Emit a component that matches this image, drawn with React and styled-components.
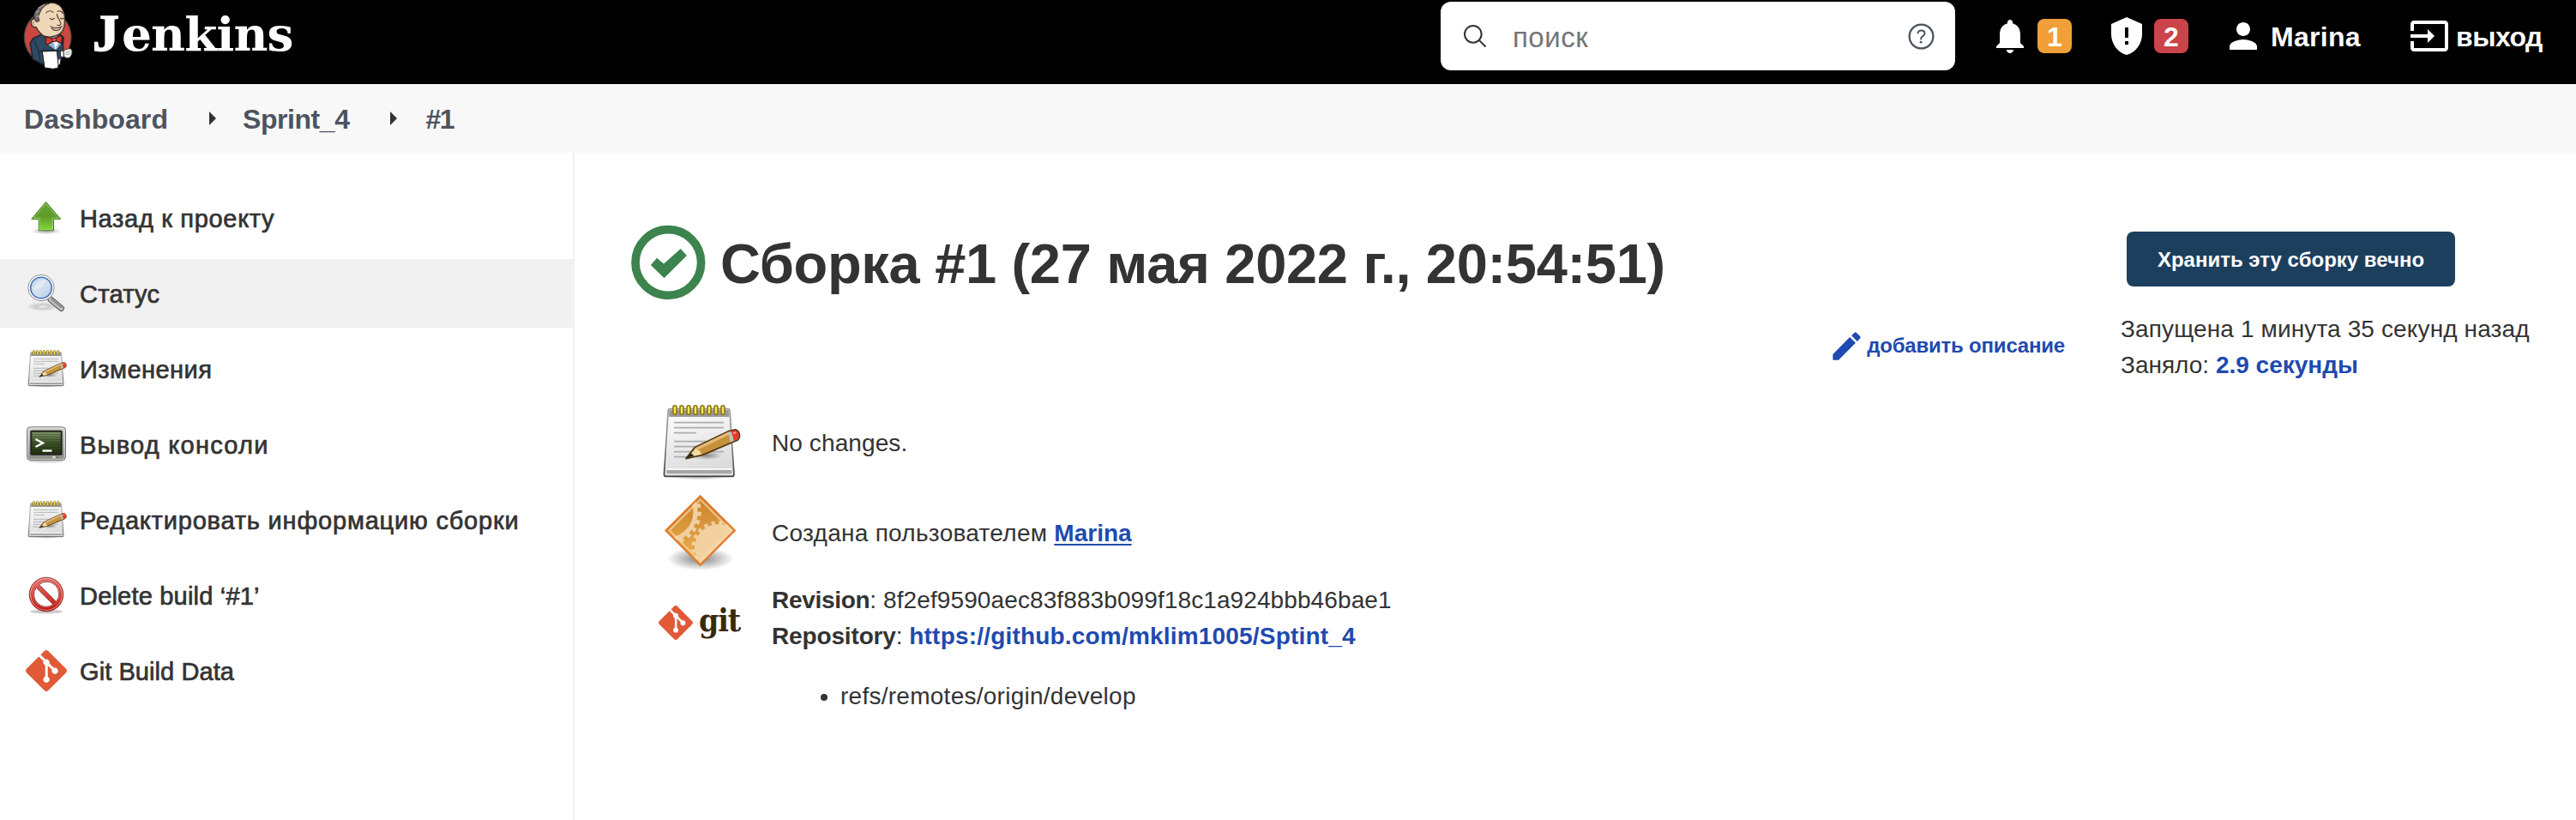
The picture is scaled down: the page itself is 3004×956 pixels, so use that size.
import React from "react";
import styled, { createGlobalStyle } from "styled-components";
import { SiGit } from "react-icons/si";

const GlobalStyle = createGlobalStyle`
  *, *::before, *::after { box-sizing: border-box; }
  body {
    margin: 0;
    background: #fff;
    color: #333;
    font-family: "Liberation Sans", Arial, sans-serif;
    font-size: 28px;
    line-height: 42px;
  }
`;

const Page = styled.div`
  display: flex;
  flex-direction: column;
  width: 3004px;
  height: 956px;
  overflow: hidden;
`;

/* ---------- header ---------- */
const Header = styled.header`
  display: flex;
  align-items: center;
  height: 98px;
  padding: 0 0 14px 10px;
  background: #000;
  color: #fff;
  flex: none;
`;
const Brand = styled.a`
  display: flex;
  align-items: flex-start;
  height: 84px;
`;
const BrandName = styled.span`
  margin-left: 8px;
  padding-top: 1px;
  font: bold 55px/78px "DejaVu Serif", serif;
  letter-spacing: -0.9px;
  white-space: nowrap;
`;
const BrandInitial = styled.span`
  font: bold 62px/60px "Liberation Serif", serif;
  letter-spacing: 3px;
  -webkit-text-stroke: 1.6px #fff;
`;
const SearchBox = styled.div`
  display: flex;
  align-items: center;
  width: 600px;
  height: 80px;
  margin-left: auto;
  padding: 0 21px 0 24px;
  border-radius: 12px;
  background: #fff;
  color: #333;
`;
const SearchHint = styled.span`
  flex: 1;
  padding: 3px 0 0 28px;
  font-size: 33px;
  letter-spacing: 0.5px;
  color: #757575;
`;
const HeaderTools = styled.nav`
  display: flex;
  align-items: center;
  width: 724px;
  padding-left: 40px;
`;
const Tool = styled.a`
  display: flex;
  align-items: center;
  margin-right: ${(p) => p.$after}px;
`;
const Badge = styled.span`
  width: 40px;
  height: 40px;
  margin-left: ${(p) => p.$gap}px;
  padding-top: 1px;
  border-radius: 8px;
  background: ${(p) => p.$color};
  font-size: 32px;
  font-weight: bold;
  line-height: 40px;
  text-align: center;
`;
const ToolLabel = styled.span`
  padding-top: 2px;
  margin-left: ${(p) => p.$gap}px;
  font-size: 32px;
  font-weight: bold;
  letter-spacing: ${(p) => p.$track || 0}px;
`;

/* ---------- breadcrumbs ---------- */
const Breadcrumbs = styled.nav`
  display: flex;
  align-items: center;
  flex: none;
  height: 80px;
  padding: 2px 0 0 28px;
  background: #f8f8f8;
`;
const Crumb = styled.a`
  font-size: 32px;
  font-weight: bold;
  color: #4d545d;
  letter-spacing: ${(p) => p.$track}px;
`;
const CrumbArrow = styled.i`
  margin: 0 ${(p) => p.$right}px 2px 48px;
  border: 8px solid transparent;
  border-left-color: #333;
  border-right: 0;
`;

/* ---------- side panel ---------- */
const Body = styled.div`
  display: flex;
  flex: 1;
`;
const SidePanel = styled.aside`
  display: flex;
  flex-direction: column;
  gap: 8px;
  width: 670px;
  padding-top: 36px;
  border-right: 2px solid #f1f1f1;
`;
const Task = styled.a`
  display: flex;
  align-items: center;
  gap: 15px;
  height: 80px;
  padding-left: 30px;
  background: ${(p) => (p.$active ? "#f1f1f1" : "transparent")};
  white-space: nowrap;
`;
const TaskLabel = styled.span`
  padding-top: 1px;
  font-size: 29px;
  -webkit-text-stroke: 0.7px #333;
  letter-spacing: ${(p) => p.$track}px;
`;

/* ---------- main panel ---------- */
const Main = styled.main`
  display: flex;
  flex: 1;
  padding: 84px 0 0 66px;
`;
const Build = styled.section`
  width: 1672px;
  margin-right: 65px;
`;
const TitleRow = styled.div`
  display: flex;
  align-items: center;
  height: 88px;
`;
const Title = styled.h1`
  margin: 0 0 0 16px;
  padding-top: 3px;
  font-size: 65px;
  line-height: 80px;
  letter-spacing: -0.32px;
  white-space: nowrap;
`;
const DescriptionRow = styled.div`
  display: flex;
  align-items: center;
  justify-content: flex-end;
  gap: 2px;
  height: 42px;
  margin: 32px 0 44px;
  font-size: 24px;
  font-weight: bold;
  letter-spacing: -0.2px;
  color: #1f4aaf;
`;
const Facts = styled.div`
  display: flex;
  flex-direction: column;
  gap: 9px;
  padding-left: 32px;
`;
const Fact = styled.div`
  display: flex;
  align-items: ${(p) => (p.$top ? "flex-start" : "center")};
  gap: 36px;
  height: ${(p) => (p.$top ? "auto" : "96px")};
`;
const FactText = styled.div`
  padding-top: ${(p) => p.$drop}px;
`;
const Line = styled.div`
  letter-spacing: ${(p) => p.$track || 0}px;
`;
const Term = styled.b`
  letter-spacing: ${(p) => p.$track}px;
`;
const Link = styled.a`
  font-weight: bold;
  color: #1f4aaf;
  letter-spacing: ${(p) => p.$track || 0}px;
  text-decoration: ${(p) => (p.$underline ? "underline" : "none")};
  text-decoration-thickness: 2px;
  text-underline-offset: 3px;
`;
const Branches = styled.ul`
  margin: 28px 0 0;
  padding: 0 0 0 80px;
  letter-spacing: 0.26px;
`;
const GitMark = styled.div`
  display: flex;
  align-items: center;
  gap: 7px;
  width: 96px;
  height: 96px;
  color: #e05a38;
`;
const GitWord = styled.span`
  margin-top: -6px;
  font: bold 37px/42px "DejaVu Serif Condensed", "DejaVu Serif", serif;
  letter-spacing: -1.1px;
  color: #3a2a0a;
`;
const Summary = styled.aside`
  flex: 1;
`;
const KeepButton = styled.button`
  display: block;
  width: 383px;
  height: 64px;
  margin: 8px 0 29px 7px;
  padding: 1px 0 0;
  border: 0;
  border-radius: 8px;
  background: #1d3f5e;
  color: #fff;
  font: bold 24px "Liberation Sans", Arial, sans-serif;
`;

/* ---------- icons ---------- */
const Glyph = ({ size = 48, d }) => (
  <svg width={size} height={size} viewBox="0 0 24 24" fill="currentColor"><path d={d} /></svg>
);
const BELL = "M12 22c1.1 0 2-.9 2-2h-4c0 1.1.89 2 2 2zm6-6v-5c0-3.07-1.64-5.64-4.5-6.32V4c0-.83-.67-1.5-1.5-1.5s-1.5.67-1.5 1.5v.68C7.63 5.36 6 7.92 6 11v5l-2 2v1h16v-1l-2-2z";
const SHIELD = "M12 1L3 5v6c0 5.55 3.84 10.74 9 12 5.16-1.26 9-6.45 9-12V5l-9-4zm-1 6h2v6h-2V7zm0 8h2v2h-2v-2z";
const PERSON = "M12 12c2.21 0 4-1.79 4-4s-1.79-4-4-4-4 1.79-4 4 1.79 4 4 4zm0 2c-2.67 0-8 1.34-8 4v2h16v-2c0-2.66-5.33-4-8-4z";
const EXIT = "M21 3.01H3c-1.1 0-2 .9-2 2V9h2V4.99h18v14.03H3V15H1v4.01c0 1.1.9 1.98 2 1.98h18c1.1 0 2-.88 2-1.98v-14c0-1.11-.9-2-2-2zM11 16l4-4-4-4v3H1v2h10v3z";
const PENCIL = "M3 17.25V21h3.75L17.81 9.94l-3.75-3.75L3 17.25zM20.71 7.04a.996.996 0 000-1.41l-2.34-2.34a.996.996 0 00-1.41 0l-1.83 1.83 3.75 3.75 1.83-1.83z";

const SearchIcon = () => (
  <svg width="32" height="32" viewBox="0 0 512 512" fill="none" stroke="#333" strokeWidth="32" strokeLinecap="round">
    <circle cx="221" cy="221" r="157" />
    <path d="M338 338L448 448" />
  </svg>
);
const HelpIcon = () => (
  <svg width="37" height="37" viewBox="0 0 512 512" fill="none" stroke="#4d545d" strokeWidth="32" strokeLinecap="round">
    <circle cx="256" cy="256" r="192" />
    <path strokeWidth="28" d="M200 202s.8-17.500 19.600-32.500C230.700 160.800 244 158.200 256 158c11-.1 20.700 1.700 26.500 4.500 10 4.700 29.500 16.300 29.500 41 0 26-17 37.800-36.400 50.800S251 281.400 251 296" />
    <circle cx="250" cy="348" r="20" fill="#4d545d" stroke="none" />
  </svg>
);

const ButlerIcon = () => (
  <svg width="90" height="90" viewBox="0 0 270 270" strokeLinejoin="round" strokeLinecap="round">
    <ellipse cx="137" cy="130" rx="84" ry="92" fill="#4b4546" />
    <ellipse cx="137" cy="130" rx="80" ry="88" fill="#cb4740" />
    <path d="M118 120L86 134 75 152l10 54 34 18 58 0 8-22 4-26 3-46-20-14-30 30z" fill="#2f4a63" stroke="#26262a" strokeWidth="5" />
    <path d="M90 142l14 34 6 36M186 138l6 34" fill="none" stroke="#22303e" strokeWidth="4" />
    <path d="M136 118l-4 36 34 24 18-22 0-30z" fill="#88b1cf" stroke="#2a2a2e" strokeWidth="3" />
    <path d="M156 146l8 26 10-20-4-10z" fill="#f5f5f5" />
    <path d="M90 66C82 66 77 74 79 82c2 10 8 14 18 13 3 8 6 13 12 18 6 12 20 17 38 16 24-2 42-14 47-34 3-14 2-26 2-38C192 28 176 11 152 10c-30-1-48 14-56 34z" fill="#eed6b6" stroke="#3b3430" strokeWidth="4" />
    <path d="M142 12C114 14 96 30 89 50l2 17 6 10 10-4-3-14 6-16c6-16 18-26 32-31z" fill="#6f6d6e" stroke="#2f2d2e" strokeWidth="3" />
    <path d="M104 28l22-12M96 44l10-6M98 58l8-3" stroke="#bdbdbd" strokeWidth="3" fill="none" />
    <path d="M88 76c-5 1-4 8 1 10" fill="none" stroke="#6e5544" strokeWidth="3" />
    <path d="M131 45c7-9 18-8 25-2M171 40c8-4 15-1 19 7M145 64c3 5 10 5 15 0M182 63c4 4 8 4 11 0M169 50c2 14 12 22 14 32 0 6-6 9-13 6M147 92c10 8 28 8 40 0M151 98c8 12 25 11 31 0" fill="none" stroke="#4a3830" strokeWidth="3.400" />
    <path d="M132 128l24 9 24-12 6 4 0 22-22-9-10 3-20 12-4-5z" fill="#d93d35" stroke="#5c1b1a" strokeWidth="4" />
    <circle cx="160" cy="139" r="7" fill="#ee4c43" stroke="#5c1b1a" strokeWidth="3" />
    <path d="M119 180l50-2 5 48-1 12-18 3-28-4z" fill="#fff" stroke="#1c1c1e" strokeWidth="3" />
    <path d="M106 180c24-5 50-5 76-1" fill="none" stroke="#1f2c38" strokeWidth="5" />
    <path d="M174 208l7-1-1 16-5 4z" fill="#e9e9e9" />
    <path d="M183 178l10 1v20l-10-1z" fill="#fff" stroke="#2a2a2e" strokeWidth="2" />
    <path d="M193 178c8-8 24-10 28-4 3 8 0 20-6 26-8 5-18 2-21-3z" fill="#f4f4f4" stroke="#3b3b3b" strokeWidth="3" />
    <path d="M200 184l16-4M200 191l14-2" stroke="#777" strokeWidth="2" />
  </svg>
);

const UpIcon = () => (
  <svg width="48" height="48" viewBox="0 0 48 48">
    <defs>
      <linearGradient id="up" x1="0" y1="0" x2="0" y2="1">
        <stop offset="0" stopColor="#6aa436" /><stop offset=".5" stopColor="#5c9c2a" /><stop offset="1" stopColor="#84d63a" />
      </linearGradient>
      <radialGradient id="upShade"><stop offset="0" stopColor="#000" stopOpacity=".35" /><stop offset="1" stopColor="#000" stopOpacity="0" /></radialGradient>
    </defs>
    <ellipse cx="24" cy="39.500" rx="18" ry="3.800" fill="url(#upShade)" />
    <path d="M23.500 5.500L6.800 25.300h8.400v13.400h17.300V25.300h8.200z" fill="url(#up)" stroke="#3f7a16" strokeWidth="1" />
    <path d="M23.500 7.300L9 24.300h7.200v13.400h15.300V24.300h7z" fill="none" stroke="#b9e08f" strokeOpacity=".7" strokeWidth=".9" />
  </svg>
);

const LensIcon = () => (
  <svg width="48" height="48" viewBox="0 0 48 48">
    <defs>
      <radialGradient id="lensShade"><stop offset="0" stopColor="#000" stopOpacity=".02" /><stop offset=".45" stopColor="#000" stopOpacity=".16" /><stop offset="1" stopColor="#000" stopOpacity="0" /></radialGradient>
      <linearGradient id="lens" x1="0" y1="0" x2="1" y2="1"><stop offset="0" stopColor="#c3d4ea" /><stop offset=".5" stopColor="#d5e1f0" /><stop offset="1" stopColor="#b4cbe8" /></linearGradient>
    </defs>
    <ellipse cx="20" cy="39.500" rx="19" ry="5.500" fill="url(#lensShade)" />
    <path d="M29 31l12.500 10.500" stroke="#555" strokeWidth="7" strokeLinecap="round" />
    <path d="M29 31l12.500 10.500" stroke="#bcbcbc" strokeWidth="5" strokeLinecap="round" />
    <path d="M29.500 30l12.500 10.500" stroke="#7c7c7c" strokeWidth="1.500" />
    <circle cx="18" cy="17.500" r="15.200" fill="#fff" stroke="#8a8a8a" strokeWidth="1" />
    <circle cx="18" cy="17.500" r="12.300" fill="url(#lens)" stroke="#3f6cb3" strokeWidth="1.500" />
    <path d="M9 21c0-8 6-12.500 14-13-1 7-6 11-14 13z" fill="#fff" opacity=".35" />
  </svg>
);

const NotepadIcon = ({ size = 48, id }) => (
  <svg width={size} height={size} viewBox="0 0 48 48" overflow="visible">
    <defs>
      <linearGradient id={`${id}p`} x1="0" y1="0" x2=".3" y2="1"><stop offset="0" stopColor="#fff" /><stop offset="1" stopColor="#dcdcdc" /></linearGradient>
      <linearGradient id={`${id}e`} x1="0" y1="0" x2="0" y2="1"><stop offset="0" stopColor="#999" /><stop offset=".5" stopColor="#888" /><stop offset="1" stopColor="#3c3c3c" /></linearGradient>
      <radialGradient id={`${id}s`}><stop offset="0" stopColor="#000" stopOpacity=".4" /><stop offset="1" stopColor="#000" stopOpacity="0" /></radialGradient>
    </defs>
    <ellipse cx="23.500" cy="43" rx="19" ry="3" fill={`url(#${id}s)`} />
    <path d="M6.400 4.300h34.200q.8 0 .9.900L44 42.500q0 1.200-1 1.200H4.200q-1 0-1-1.200L5.600 5.200q.1-.9.800-.900z" fill={`url(#${id}p)`} stroke={`url(#${id}e)`} strokeWidth=".8" />
    <path d="M6.200 5h34.700l.3 4H6z" fill="#9a9a9a" />
    <path d="M4.700 39.500h37.900" stroke="#fff" strokeWidth=".8" />
    <path d="M4.700 41h37.900" stroke="#a6a6a6" strokeWidth="2" />
    <path d="M9 12.300h29M9 15.300h29M9 18.300h13M9 23.300h24M9 26.300h19M9 29.300h29M9 32.300h8" stroke="#adadad" strokeWidth=".9" />
    <ellipse cx="28" cy="31.500" rx="9" ry="2.500" fill={`url(#${id}s)`} />
    {[9.5, 13.5, 17.5, 21.5, 25.5, 29.5, 33.5, 37.5].map((x) => (
      <rect key={x} x={x - 1} y="2.400" width="2" height="5.200" rx="1" fill="#f7e84e" stroke="#8c7415" strokeWidth=".8" />
    ))}
    <path d="M16 33.300l5-6.400L40.500 17.500l4.200-1c2.500.6 3.400 4 1.500 6L25.700 31.200z" fill="#c6923e" stroke="#54390f" strokeWidth=".9" strokeLinejoin="round" />
    <path d="M21.500 28L41 18.500" stroke="#e3bc7c" strokeWidth="1.700" />
    <path d="M17 32.600l4.400-4.800c2 .2 3.200 1.300 3.600 3.100z" fill="#f1dba5" />
    <path d="M16 33.300l2.900-3 1.800 1.300z" fill="#222" />
    <path d="M40.300 18.100l1.800-.8 1.700 5.700-2 .9q-.2-3.300-1.500-5.800z" fill="#c2c5c8" />
    <path d="M42.300 17.300l2.400-.6c2 .5 3 3.500 1.300 5.200l-2.200 1q-.2-3-1.500-5.600z" fill="#e8392f" />
    <path d="M43.500 18.500l1.700-.4" stroke="#ff9a90" strokeWidth="1" />
  </svg>
);

const TerminalIcon = () => (
  <svg width="48" height="48" viewBox="0 0 48 48">
    <defs>
      <linearGradient id="tv" x1="0" y1="0" x2="0" y2="1"><stop offset="0" stopColor="#d0d1cd" /><stop offset="1" stopColor="#8b8c87" /></linearGradient>
      <linearGradient id="crt" x1="0" y1="0" x2="0" y2="1"><stop offset="0" stopColor="#7f9265" /><stop offset=".5" stopColor="#3e5227" /><stop offset="1" stopColor="#22310f" /></linearGradient>
    </defs>
    <ellipse cx="24" cy="43.500" rx="20" ry="2.300" fill="#000" opacity=".14" />
    <rect x="1.500" y="3.800" width="45" height="38.700" rx="4" fill="url(#tv)" stroke="#73746f" />
    <rect x="2.600" y="4.900" width="42.800" height="36.500" rx="3" fill="none" stroke="#ecece8" strokeOpacity=".7" />
    <rect x="5.300" y="7.800" width="37.400" height="29" rx="1.500" fill="#23251f" />
    <rect x="7.300" y="9.800" width="33.400" height="25.200" fill="url(#crt)" />
    <path d="M7 12.500h34M7 15.500h34M7 18.500h34M7 21.500h34M7 24.500h34M7 27.500h34M7 30.500h34M7 33.500h34" stroke="#1c290c" strokeOpacity=".3" />
    <path d="M11.500 18l8.500 4.500-8.500 4.500" fill="none" stroke="#fff" strokeWidth="2.400" />
    <path d="M19.500 31.500h11" stroke="#fff" strokeWidth="2.400" />
    <rect x="31.500" y="37.800" width="3" height="2.400" fill="#d6f7a3" />
    <rect x="35.500" y="37.800" width="3" height="2.400" fill="#777" />
  </svg>
);

const ForbidIcon = () => (
  <svg width="48" height="48" viewBox="0 0 48 48">
    <defs>
      <linearGradient id="no" x1="0" y1="0" x2="0" y2="1"><stop offset="0" stopColor="#e07068" /><stop offset=".5" stopColor="#d5453d" /><stop offset="1" stopColor="#c01510" /></linearGradient>
    </defs>
    <ellipse cx="24" cy="43" rx="19" ry="2.300" fill="#000" opacity=".2" />
    <path fillRule="evenodd" d="M24 3.200a19.800 19.800 0 100 39.600 19.800 19.800 0 000-39.600zM15.500 11.500A14.200 14.200 0 0135.500 31.500zM12.200 15A14.200 14.200 0 0032 34.800z" fill="url(#no)" stroke="#8f2a26" strokeWidth=".9" />
    <circle cx="24" cy="23" r="18.400" fill="none" stroke="#fff" strokeOpacity=".45" />
    <circle cx="24" cy="23" r="15.200" fill="none" stroke="#fff" strokeOpacity=".3" strokeWidth=".7" />
  </svg>
);

const CauseIcon = () => (
  <svg width="96" height="96" viewBox="0 0 48 48">
    <defs>
      <linearGradient id="cause" x1="0" y1="0" x2="0" y2="1"><stop offset="0" stopColor="#c9822b" /><stop offset="1" stopColor="#f0b050" /></linearGradient>
      <radialGradient id="causeShade"><stop offset="0" stopColor="#000" stopOpacity=".5" /><stop offset="1" stopColor="#000" stopOpacity="0" /></radialGradient>
      <clipPath id="causeClip"><path d="M24.300 2.600L44.400 22.700 24.300 42.800 4.200 22.700z" /></clipPath>
    </defs>
    <ellipse cx="24.300" cy="39.200" rx="19.500" ry="6.800" fill="url(#causeShade)" />
    <path d="M24.300 2.600L44.400 22.700 24.300 42.800 4.200 22.700z" fill="url(#cause)" />
    <g clipPath="url(#causeClip)" fill="none" stroke="#f0cfa0">
      <circle cx="5.500" cy="12" r="16" strokeWidth="2.600" />
      <circle cx="5.500" cy="12" r="18.200" strokeWidth="2.400" strokeDasharray="2.300 2.450" />
      <circle cx="35" cy="33" r="14" fill="#f2d09f" stroke="none" />
      <circle cx="35" cy="33" r="14.600" strokeWidth="2.600" strokeDasharray="2.100 2.200" />
    </g>
    <path d="M24.300 4.700L42.300 22.700 24.300 40.700 6.300 22.700z" fill="none" stroke="#f7d9ad" strokeOpacity=".75" strokeWidth="1" />
    <path d="M24.300 2.600L44.400 22.700 24.300 42.800 4.200 22.700z" fill="none" stroke="#e17c2d" strokeWidth="1.100" />
  </svg>
);

const SuccessIcon = () => (
  <svg width="88" height="88" viewBox="0 0 88 88">
    <circle cx="43.300" cy="44" r="38.300" fill="none" stroke="#3d834e" strokeWidth="9.700" />
    <path d="M22.900 47l7.100-8.200 8 6.700 19.700-17.500 7.200 8-26.400 26.300z" fill="#3d834e" />
  </svg>
);

const TASKS = [
  { label: "Назад к проекту", track: 0.68, icon: <UpIcon /> },
  { label: "Статус", track: 0.25, icon: <LensIcon />, active: true },
  { label: "Изменения", track: 0.45, icon: <NotepadIcon id="changes" /> },
  { label: "Вывод консоли", track: 1.25, icon: <TerminalIcon /> },
  { label: "Редактировать информацию сборки", track: 0.8, icon: <NotepadIcon id="edit" /> },
  { label: "Delete build ‘#1’", track: 0.2, icon: <ForbidIcon /> },
  { label: "Git Build Data", track: 0.08, icon: <SiGit size={48} color="#e05a38" /> },
];

export default function App() {
  return (
    <Page>
      <GlobalStyle />
      <Header>
        <Brand>
          <ButlerIcon />
          <BrandName><BrandInitial>J</BrandInitial>enkins</BrandName>
        </Brand>
        <SearchBox>
          <SearchIcon />
          <SearchHint>поиск</SearchHint>
          <HelpIcon />
        </SearchBox>
        <HeaderTools>
          <Tool $after={40}><Glyph d={BELL} /><Badge $color="#f19f38" $gap={8}>1</Badge></Tool>
          <Tool $after={40}><Glyph d={SHIELD} /><Badge $color="#cb4449" $gap={8}>2</Badge></Tool>
          <Tool $after={56}><Glyph d={PERSON} /><ToolLabel $gap={8} $track={0.3}>Marina</ToolLabel></Tool>
          <Tool $after={0}><Glyph d={EXIT} /><ToolLabel $gap={7} $track={-0.5}>выход</ToolLabel></Tool>
        </HeaderTools>
      </Header>

      <Breadcrumbs>
        <Crumb $track={0.1}>Dashboard</Crumb>
        <CrumbArrow $right={31} />
        <Crumb $track={-0.45}>Sprint_4</Crumb>
        <CrumbArrow $right={33} />
        <Crumb $track={-1.5}>#1</Crumb>
      </Breadcrumbs>

      <Body>
        <SidePanel>
          {TASKS.map((t) => (
            <Task key={t.label} $active={t.active}>
              {t.icon}
              <TaskLabel $track={t.track}>{t.label}</TaskLabel>
            </Task>
          ))}
        </SidePanel>

        <Main>
          <Build>
            <TitleRow>
              <SuccessIcon />
              <Title>Сборка #1 (27 мая 2022 г., 20:54:51)</Title>
            </TitleRow>
            <DescriptionRow>
              <Glyph size={43} d={PENCIL} />добавить описание
            </DescriptionRow>
            <Facts>
              <Fact>
                <NotepadIcon id="summary" size={96} />
                <FactText $drop={2}><Line $track={0.1}>No changes.</Line></FactText>
              </Fact>
              <Fact>
                <CauseIcon />
                <FactText $drop={2}>
                  <Line $track={0.28}>Создана пользователем <Link $underline>Marina</Link></Line>
                </FactText>
              </Fact>
              <Fact $top>
                <GitMark><SiGit size={40} /><GitWord>git</GitWord></GitMark>
                <FactText $drop={1}>
                  <Line $track={0.1}><Term $track={-0.3}>Revision</Term>: 8f2ef9590aec83f883b099f18c1a924bbb46bae1</Line>
                  <Line><Term $track={-0.15}>Repository</Term>: <Link $track={0.19}>https://github.com/mklim1005/Sptint_4</Link></Line>
                  <Branches><li>refs/remotes/origin/develop</li></Branches>
                </FactText>
              </Fact>
            </Facts>
          </Build>

          <Summary>
            <KeepButton>Хранить эту сборку вечно</KeepButton>
            <Line $track={0.13}>Запущена 1 минута 35 секунд назад</Line>
            <Line>Заняло: <Link>2.9 секунды</Link></Line>
          </Summary>
        </Main>
      </Body>
    </Page>
  );
}
